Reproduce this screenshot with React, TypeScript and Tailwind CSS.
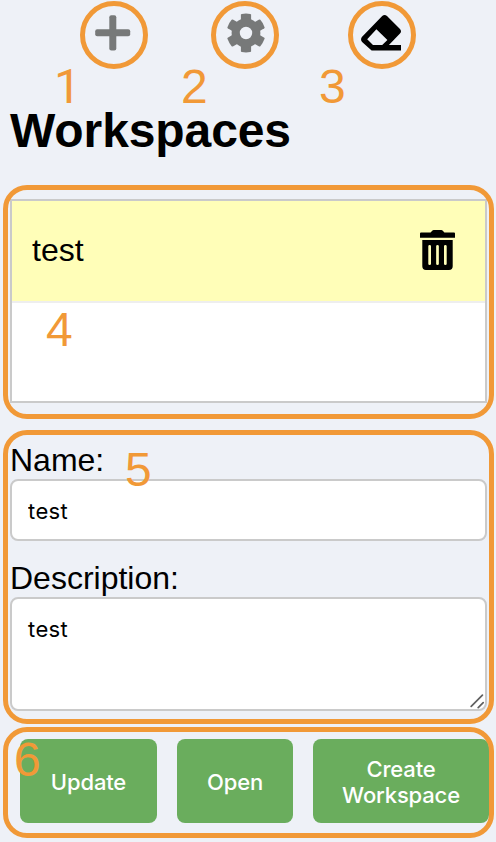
import React from "react";

const sans = "font-['Liberation_Sans',Arial,sans-serif]";
const inter = "font-['Inter',sans-serif]";

function PlusIcon() {
  return (
    <svg className="h-9 w-9" viewBox="0 0 36 36" fill="#777979">
      <rect x="14.3" y="0.3" width="7" height="35.2" rx="2" />
      <rect x="0.2" y="14.3" width="35" height="7" rx="2" />
    </svg>
  );
}

function GearIcon() {
  const teeth = [0, 60, 120, 180, 240, 300];
  return (
    <svg className="h-10 w-10" viewBox="-20 -20 40 40" fill="#777979">
      {teeth.map((angle) => (
        <path
          key={angle}
          transform={`rotate(${angle})`}
          d="M-5.1-10V-18.2Q-5-18.8-4.2-19Q0-19.8 4.2-19Q5-18.8 5.1-18.2V-10Z"
        />
      ))}
      <path
        fillRule="evenodd"
        d="M0-14.4A14.4 14.4 0 1 1 0 14.4A14.4 14.4 0 1 1 0-14.4ZM0-6.2A6.2 6.2 0 1 0 0 6.2A6.2 6.2 0 1 0 0-6.2Z"
      />
    </svg>
  );
}

function EraserIcon() {
  return (
    <svg className="h-9 w-10" viewBox="0 0 40 36" fill="#000">
      <path
        fillRule="evenodd"
        d="M21.2 1.1Q23.6-.9 26 1.1L39 13.9Q41 16.2 39 18.6L27.9 30H40V35.5H10.6L1.1 27Q-1 24.5 1.1 21.8ZM15.4 14.3L6.2 24.3L12 30H21.2L26.4 25Z"
      />
    </svg>
  );
}

function TrashIcon() {
  return (
    <svg className="h-10 w-[35px]" viewBox="0 0 35 40" fill="#000">
      <path d="M1 2.5H10.6L12.2.7Q12.8 0 13.8 0H21.2Q22.2 0 22.8.7L24.4 2.5H34Q35 2.5 35 3.5V7.7H0V3.5Q0 2.5 1 2.5Z" />
      <path
        fillRule="evenodd"
        d="M2.3 10H32.7V36.3Q32.7 40 29 40H6Q2.3 40 2.3 36.3ZM9.6 15A1.35 1.35 0 0 0 8.3 16.3V33.7A1.35 1.35 0 0 0 11 33.7V16.3A1.35 1.35 0 0 0 9.6 15ZM17.5 15A1.35 1.35 0 0 0 16.15 16.3V33.7A1.35 1.35 0 0 0 18.85 33.7V16.3A1.35 1.35 0 0 0 17.5 15ZM25.4 15A1.35 1.35 0 0 0 24 16.3V33.7A1.35 1.35 0 0 0 26.7 33.7V16.3A1.35 1.35 0 0 0 25.4 15Z"
      />
    </svg>
  );
}

function Ring({ at }: { at: string }) {
  return <div className={`absolute top-[1.2px] size-[67.5px] rounded-full border-5 border-[#f19937] ${at}`} />;
}

function Outline({ at }: { at: string }) {
  return <div className={`absolute left-[3px] w-[491px] rounded-[24px] border-5 border-[#f19937] ${at}`} />;
}

function Numeral({ at, children }: { at: string; children: React.ReactNode }) {
  return <span className={`absolute text-[48px] leading-[48px] text-[#f19937] ${at}`}>{children}</span>;
}

export default function App() {
  const button =
    "flex h-[84px] items-center justify-center rounded-lg bg-[#6aad5d] pt-0.5 text-center text-[22px] leading-[26px] font-medium tracking-[-0.15px] text-white";
  return (
    <div className={`relative h-[842px] w-[496px] overflow-hidden bg-[#eef1f7] text-black ${sans}`}>
      <main className="flex h-full flex-col pl-[10px]">
        <header className="flex h-[66px] items-center pl-[85px]">
          <button className="flex w-9"><PlusIcon /></button>
          <button className="ml-[95px] flex w-10"><GearIcon /></button>
          <button className="ml-[95px] flex w-10"><EraserIcon /></button>
        </header>

        <h1 className="mt-[38px] h-[54px] text-[48px] leading-[54px] font-bold tracking-[-0.1px]">Workspaces</h1>

        <ul className="mt-[41px] h-[204px] w-[477px] border-2 border-[#cacaca] bg-white">
          <li className="flex h-[102px] items-center justify-between border-b-2 border-[#eee] bg-[#fffeb8] pr-[30px] pb-0.5 pl-5 text-[32px] leading-9">
            <span>test</span>
            <button><TrashIcon /></button>
          </li>
        </ul>

        <label className="mt-[39px] block h-[37px] text-[32px] leading-[36px]">Name:</label>
        <input
          defaultValue="test"
          className={`h-[62px] w-[477px] rounded-lg border-2 border-[#cacaca] bg-white px-4 pt-0.5 text-[22px] tracking-[0.4px] outline-none ${inter}`}
        />

        <label className="mt-[19px] block h-[37px] text-[32px] leading-[36px]">Description:</label>
        <div className="relative h-[114px] w-[477px]">
          <textarea
            defaultValue="test"
            className={`block h-full w-full resize-none rounded-lg border-2 border-[#cacaca] bg-white px-4 pt-[17px] text-[22px] leading-[26px] tracking-[0.4px] outline-none ${inter}`}
          />
          <svg className="absolute right-px bottom-px h-4 w-4" viewBox="0 0 16 16" stroke="#606060" strokeWidth="1.7" strokeLinecap="round">
            <path d="M1.2 12.4L12.4 1.2M8.2 13.6L13.2 8.6" />
          </svg>
        </div>

        <div className={`mt-7 flex gap-5 pl-[10px] ${inter}`}>
          <button className={`w-[137px] ${button}`}>Update</button>
          <button className={`w-[116px] ${button}`}>Open</button>
          <button className={`w-[176px] ${button}`}>Create<br />Workspace</button>
        </div>
      </main>

      <div className="pointer-events-none absolute inset-0">
        <Ring at="left-[80.3px]" />
        <Ring at="left-[211.4px]" />
        <Ring at="left-[348.3px]" />
        <Outline at="top-[185px] h-[234px]" />
        <Outline at="top-[430px] h-[294px]" />
        <Outline at="top-[727px] h-[111px]" />
        <Numeral at="left-[54px] top-[63px] font-['Roboto',sans-serif]">1</Numeral>
        <Numeral at="left-[181px] top-[63px]">2</Numeral>
        <Numeral at="left-[319px] top-[63px]">3</Numeral>
        <Numeral at="left-[46px] top-[306px]">4</Numeral>
        <Numeral at="left-[125px] top-[446px]">5</Numeral>
        <Numeral at="left-[14px] top-[736px]">6</Numeral>
      </div>
    </div>
  );
}
